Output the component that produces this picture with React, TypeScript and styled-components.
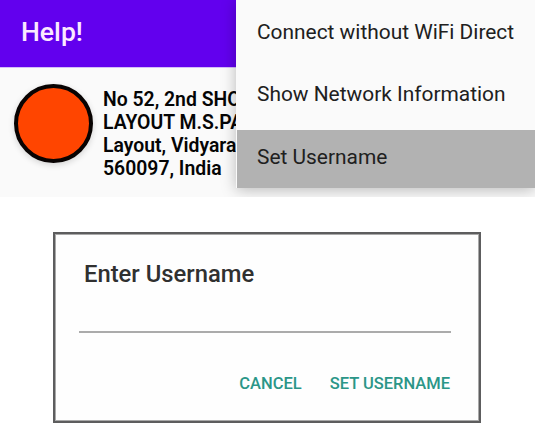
import React from "react";
import styled, { createGlobalStyle } from "styled-components";

const GlobalStyle = createGlobalStyle`
  * { box-sizing: border-box; }
  body {
    margin: 0;
    background: #fff;
    font-family: Roboto, sans-serif;
  }
`;

const Page = styled.main`
  width: 540px;
  height: 435px;
  overflow: hidden;
`;

const Screen = styled.section`
  position: relative;
  width: 535px;
  height: 197px;
  overflow: hidden;
  background: #fafafa;
`;

const AppBar = styled.header`
  display: flex;
  align-items: center;
  height: 68px;
  padding: 0 0 4px 21px;
  background: #6200ee;
  border-bottom: 1px solid #d3bdf8;
`;

const Title = styled.h1`
  margin: 0;
  color: #fbe9ff;
  font-size: 26.6px;
  font-weight: 500;
  line-height: 30px;
`;

const Contact = styled.div`
  display: flex;
  gap: 10px;
  padding: 16px 0 0 14px;
`;

const Avatar = styled.div`
  flex: none;
  width: 79px;
  height: 79px;
  border: 4px solid #080302;
  border-radius: 50%;
  background: #ff4500;
  box-shadow: 0 2px 6px rgba(0, 0, 0, 0.16);
`;

const Address = styled.p`
  margin: 4px 0 0;
  color: #050505;
  font-size: 19.4px;
  font-weight: 600;
  line-height: 23px;
  white-space: pre;
`;

const Menu = styled.ul`
  position: absolute;
  top: 0;
  right: 0;
  width: 299px;
  height: 188px;
  margin: 0;
  padding: 0;
  list-style: none;
  background: #fafafa;
  box-shadow: 0 2px 14px rgba(0, 0, 0, 0.26);
`;

const MenuItem = styled.li<{ $active?: boolean; $height: number }>`
  display: flex;
  align-items: center;
  height: ${({ $height }) => $height}px;
  margin-left: 1px;
  padding: 0 0 4px 20px;
  color: #202020;
  background: ${({ $active }) => ($active ? "#b2b2b2" : "transparent")};
  font-size: 20.9px;
  line-height: 24px;
  white-space: nowrap;

  &:nth-child(2) {
    padding-bottom: 9px;
  }
`;

const Dialog = styled.section`
  display: flex;
  flex-direction: column;
  width: 428px;
  height: 191px;
  margin: 35px 0 0 53px;
  padding: 26px 28px 0 24px;
  border: 2px solid #5d5d5e;
  outline: 1px solid #a9a9a9;
  outline-offset: -3px;
  background: #fefefe;
`;

const DialogTitle = styled.h2`
  margin: 0 0 0 5px;
  color: #303030;
  font-size: 23.8px;
  font-weight: 500;
  line-height: 28px;
`;

const Field = styled.div`
  height: 45px;
  border-bottom: 2px solid #ababab;
`;

const Actions = styled.div`
  display: flex;
  justify-content: flex-end;
  gap: 28px;
  margin: 41px 1px 0 0;
`;

const Action = styled.button`
  padding: 0;
  border: 0;
  background: none;
  color: #2b9688;
  font: 500 16.5px/20px Roboto, sans-serif;
  white-space: nowrap;
`;

export default function App() {
  return (
    <Page>
      <GlobalStyle />
      <Screen>
        <AppBar>
          <Title>Help!</Title>
        </AppBar>
        <Contact>
          <Avatar />
          <Address>{"No 52, 2nd SHO\nLAYOUT M.S.PA\nLayout, Vidyara\n560097, India"}</Address>
        </Contact>
        <Menu>
          <MenuItem $height={67}>Connect without WiFi Direct</MenuItem>
          <MenuItem $height={63}>Show Network Information</MenuItem>
          <MenuItem $height={58} $active>
            Set Username
          </MenuItem>
        </Menu>
      </Screen>
      <Dialog>
        <DialogTitle>Enter Username</DialogTitle>
        <Field />
        <Actions>
          <Action>CANCEL</Action>
          <Action>SET USERNAME</Action>
        </Actions>
      </Dialog>
    </Page>
  );
}
